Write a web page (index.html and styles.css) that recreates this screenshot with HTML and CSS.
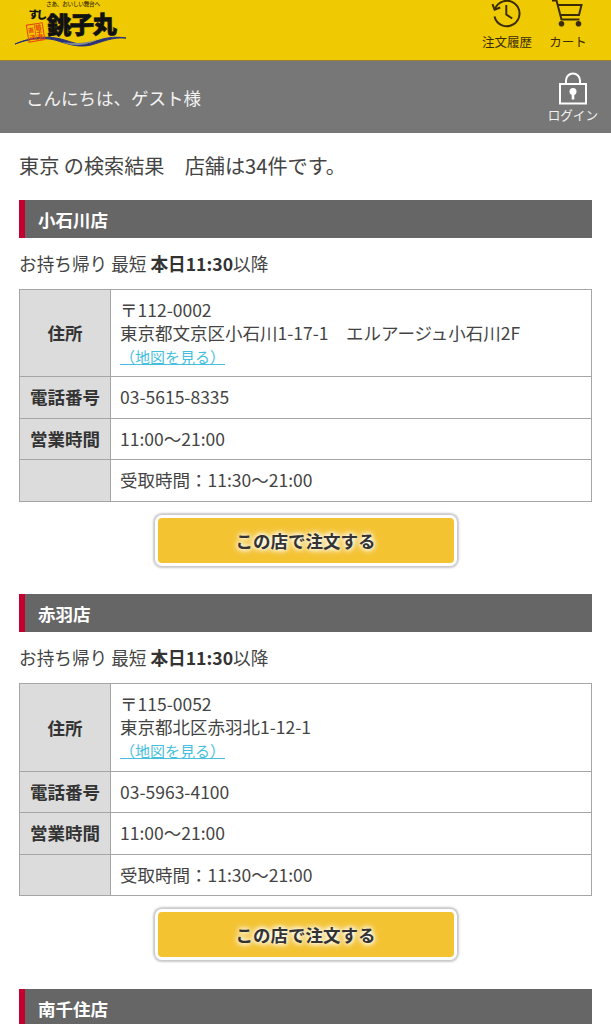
FILE: index.html
```html
<!DOCTYPE html>
<html lang="ja">

<head>
    <meta charset="UTF-8">
    <meta name="viewport" content="width=device-width, initial-scale=1.0">
    <title>すし銚子丸 店舗検索</title>
    <link rel="stylesheet" href="styles.css">
</head>

<body>
    <header class="header">
        <a class="logo">
            <svg width="116" height="50" viewBox="12 0 116 50">
                <text class="logo-copy" x="46" y="6" textLength="54">さあ、おいしい舞台へ</text>
                <text class="logo-sushi" x="28" y="18" textLength="19" transform="rotate(4 28 18)">すし</text>
                <path class="logo-wave" d="M15 44C29 38 42 36 56 38C69 40 78 47 91 43C103 38 113 36 126 38C112 37 102 42 91 45C78 48 68 44 55 40C42 37 28 39 15 44Z" />
                <path class="logo-wave-light" d="M62 42C75 48 87 45 98 39C88 43 77 44 62 42Z" />
                <text class="logo-name" x="47" y="34.5" textLength="70" transform="rotate(-1 47 35)">銚子丸</text>
                <g transform="rotate(-9 35 32)">
                    <rect class="logo-seal" x="27.5" y="24" width="16" height="17" />
                    <path class="logo-seal-line" d="M35.4 24V41" />
                    <text class="logo-seal-text" x="36.2" y="30">銚</text>
                    <text class="logo-seal-text" x="36.2" y="35">子</text>
                    <text class="logo-seal-text" x="36.2" y="40">港</text>
                    <text class="logo-seal-text" x="28.5" y="32">直</text>
                    <text class="logo-seal-text" x="28.5" y="39">送</text>
                </g>
            </svg>
        </a>
        <nav class="header-nav">
            <a class="nav-item">
                <svg class="nav-icon" width="36" height="28" viewBox="0 0 36 28">
                    <path d="M5.8 9.5A12.7 12.7 0 1 1 5.5 16.5" />
                    <path d="M3.5 4.2L5.6 9.8L11.2 7.5" />
                    <path d="M17.3 5V14.5L23.2 18.5" />
                </svg>
                <span>注文履歴</span>
            </a>
            <a class="nav-item">
                <svg class="nav-icon" width="36" height="28" viewBox="0 0 36 28">
                    <path d="M2 .5H6.5L11.5 19.5H29.5" />
                    <path d="M7.7 5H31.5L29 15H10.3" />
                    <circle class="wheel" cx="11.5" cy="23.8" r="2.8" />
                    <circle class="wheel" cx="28.5" cy="23.8" r="2.8" />
                </svg>
                <span>カート</span>
            </a>
        </nav>
    </header>

    <div class="user-bar">
        <p class="greeting">こんにちは、ゲスト様</p>
        <a class="login">
            <svg width="30" height="33" viewBox="0 0 30 33">
                <path class="lock-line" d="M8 11.5V8.5a7 7 0 0 1 14 0V11.5" />
                <rect class="lock-line" x="2" y="12" width="26" height="19.5" />
                <circle class="lock-hole" cx="15" cy="19.5" r="3.5" />
                <rect class="lock-hole" x="13.7" y="20" width="2.6" height="7.5" />
            </svg>
            <span>ログイン</span>
        </a>
    </div>

    <main class="content">
        <h1 class="result-title">東京 の検索結果　店舗は34件です。</h1>

        <section class="shop">
            <h2 class="shop-name">小石川店</h2>
            <p class="shop-time">お持ち帰り 最短 <strong>本日11:30</strong>以降</p>
            <table class="shop-table">
                <tr class="row-address">
                    <th>住所</th>
                    <td>〒112-0002<br>東京都文京区小石川1-17-1　エルアージュ小石川2F<br><a class="map-link">（地図を見る）</a></td>
                </tr>
                <tr>
                    <th>電話番号</th>
                    <td>03-5615-8335</td>
                </tr>
                <tr>
                    <th>営業時間</th>
                    <td>11:00～21:00</td>
                </tr>
                <tr>
                    <th></th>
                    <td>受取時間：11:30～21:00</td>
                </tr>
            </table>
            <button class="order-button" type="button">この店で注文する</button>
        </section>

        <section class="shop">
            <h2 class="shop-name">赤羽店</h2>
            <p class="shop-time">お持ち帰り 最短 <strong>本日11:30</strong>以降</p>
            <table class="shop-table">
                <tr class="row-address">
                    <th>住所</th>
                    <td>〒115-0052<br>東京都北区赤羽北1-12-1<br><a class="map-link">（地図を見る）</a></td>
                </tr>
                <tr>
                    <th>電話番号</th>
                    <td>03-5963-4100</td>
                </tr>
                <tr>
                    <th>営業時間</th>
                    <td>11:00～21:00</td>
                </tr>
                <tr>
                    <th></th>
                    <td>受取時間：11:30～21:00</td>
                </tr>
            </table>
            <button class="order-button" type="button">この店で注文する</button>
        </section>

        <section class="shop">
            <h2 class="shop-name">南千住店</h2>
        </section>
    </main>
</body>

</html>
```
FILE: styles.css
```css
* {
    box-sizing: border-box;
}

body {
    margin: 0;
    height: 1024px;
    overflow: hidden;
    background-color: #fff;
    color: #444;
    font-family: "Noto Sans CJK JP", sans-serif;
    font-size: 17.5px;
    line-height: 23px;
}

h1,
h2,
p {
    margin: 0;
}

/* header */
.header {
    display: flex;
    justify-content: space-between;
    height: 60px;
    padding: 0 15px 0 12px;
    background-color: #efca03;
}

.logo-copy {
    font-size: 5.6px;
    font-weight: 500;
    fill: #3a2c00;
}

.logo-sushi {
    font-size: 11px;
    font-weight: 900;
    fill: #111;
}

.logo-name {
    font-size: 24.5px;
    font-weight: 900;
    fill: #111;
    stroke: #111;
    stroke-width: 0.6px;
}

.logo-wave {
    fill: #26307c;
    stroke: #26307c;
    stroke-width: 1px;
}

.logo-wave-light {
    fill: #7d8794;
}

.logo-seal {
    fill: none;
    stroke: #e8420c;
    stroke-width: 1px;
}

.logo-seal-line {
    stroke: #e8420c;
    stroke-width: 0.7px;
}

.logo-seal-text {
    font-size: 6px;
    font-weight: 700;
    fill: #e8420c;
}

.header-nav {
    display: flex;
    gap: 5px;
}

.nav-item {
    display: flex;
    flex-direction: column;
    align-items: center;
    width: 56px;
    color: #3a2c00;
    font-size: 12.5px;
    line-height: 28px;
}

.nav-icon {
    fill: none;
    stroke: #3a2c00;
    stroke-width: 2px;
}

.wheel {
    fill: #3a2c00;
    stroke: none;
}

/* greeting */
.user-bar {
    display: flex;
    justify-content: space-between;
    height: 73px;
    padding: 0 13px 0 26px;
    border-top: 1px solid #9b8030;
    background-color: #777;
    color: #f2f2f2;
}

.greeting {
    line-height: 73px;
}

.login {
    display: flex;
    flex-direction: column;
    align-items: center;
    padding-top: 11px;
    font-size: 12.6px;
    line-height: 19px;
}

.lock-line {
    fill: none;
    stroke: #fff;
    stroke-width: 2px;
}

.lock-hole {
    fill: #fff;
}

/* search result */
.content {
    padding: 20px 19px 0;
}

.result-title {
    height: 46.5px;
    font-size: 20.15px;
    font-weight: 400;
    line-height: 26px;
}

.shop {
    height: 394.5px;
}

.shop:last-child {
    height: auto;
}

.shop-name {
    height: 38px;
    padding-left: 13px;
    border-left: 6px solid #c3002f;
    background-color: #666;
    color: #fff;
    font-size: 17.5px;
    font-weight: 700;
    line-height: 40px;
}

.shop-time {
    height: 51px;
    font-size: 17.65px;
    line-height: 51px;
}

.shop-time strong {
    color: #333;
    font-weight: 700;
}

.shop-table {
    width: 573px;
    border-collapse: collapse;
    table-layout: fixed;
}

.shop-table th,
.shop-table td {
    height: 41.6px;
    padding: 0 9px 1px;
    border: 1px solid #a5a5a5;
    text-align: left;
}

.shop-table th {
    width: 91px;
    padding: 0 0 1px;
    background-color: #dcdcdc;
    color: #333;
    font-weight: 700;
    text-align: center;
}

.shop-table .row-address th,
.shop-table .row-address td {
    height: 87.5px;
    padding-bottom: 0;
}

.map-link {
    color: #45bfdd;
    font-size: 15px;
    text-decoration: underline;
}

.order-button {
    display: block;
    width: 296px;
    height: 45px;
    margin: 16px auto 0;
    border: 0;
    border-radius: 4px;
    background-color: #f4c332;
    box-shadow: 0 0 0 3px #fff, 0 0 2px 5px #cac8cb;
    color: #333;
    font-family: inherit;
    font-size: 17.5px;
    font-weight: 700;
    text-shadow: 0 0 5px #fff, 0 0 5px #fff, 0 0 8px #fff;
}
```
